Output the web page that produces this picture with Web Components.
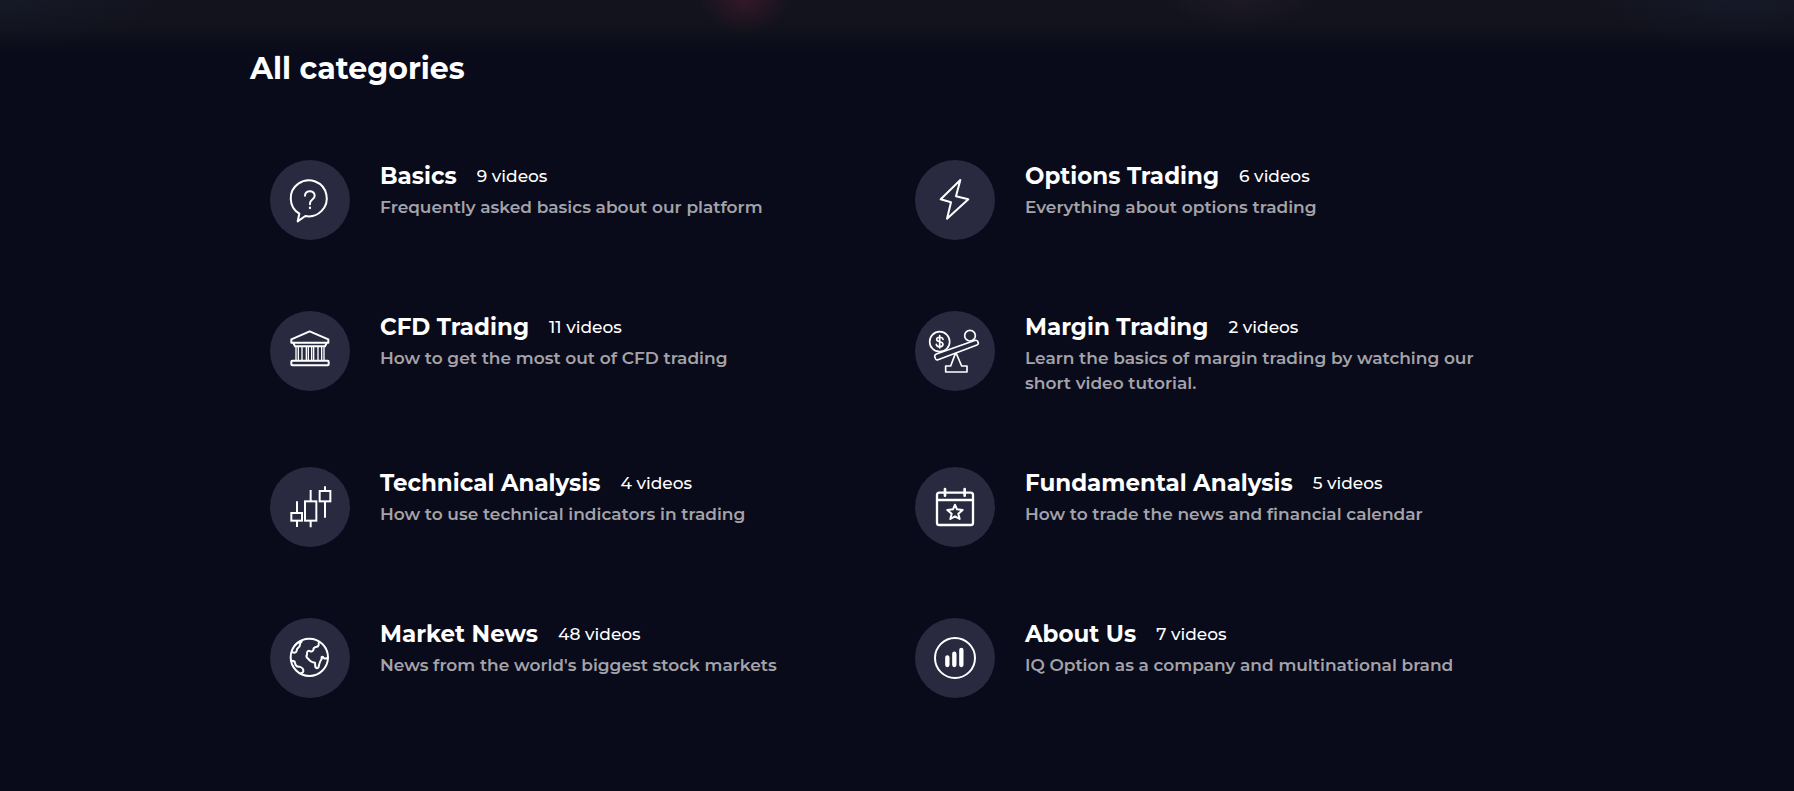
<!DOCTYPE html>
<html lang="en">
<head>
<meta charset="utf-8">
<meta name="viewport" content="width=device-width, initial-scale=1">
<title>All categories</title>
<style>
  html { background: #090a1a; }
  body { margin: 0; color: #fff; font-family: Montserrat, Inter, sans-serif; }
</style>
</head>
<body>
<categories-page>
  <span slot="heading">All categories</span>
  <category-card icon="question" count="9">Basics<span slot="description">Frequently asked basics about our platform</span></category-card>
  <category-card icon="bolt" count="6">Options Trading<span slot="description">Everything about options trading</span></category-card>
  <category-card icon="bank" count="11">CFD Trading<span slot="description">How to get the most out of CFD trading</span></category-card>
  <category-card icon="balance" count="2">Margin Trading<span slot="description">Learn the basics of margin trading by watching our short video tutorial.</span></category-card>
  <category-card icon="candles" count="4">Technical Analysis<span slot="description">How to use technical indicators in trading</span></category-card>
  <category-card icon="calendar" count="5">Fundamental Analysis<span slot="description">How to trade the news and financial calendar</span></category-card>
  <category-card icon="globe" count="48">Market News<span slot="description">News from the world's biggest stock markets</span></category-card>
  <category-card icon="chart" count="7">About Us<span slot="description">IQ Option as a company and multinational brand</span></category-card>
</categories-page>

<script>
const ICONS = {
  question: `<path d="M118 191A54 54 0 1 1 136 198L113 214Z"/><path d="M135 137C135 119 164 119 164 137C164 149 150 148 150 160V163"/><path d="M150 173v1" stroke-width="7"/>`,
  bolt: `<path d="M166 90L107 148L138 157L126 206L190 148L153 139Z"/>`,
  bank: `<path d="M94 125V115L149 91L205 115V125Z"/><path d="M100 126L105 136H195L200 126"/><path d="M108 137V178M115 137V178M126 137V178M139 137V178M145 137V178M155 137V178M161 137V178M174 137V178M185 137V178M192 137V178" stroke-width="4"/><rect x="94" y="179" width="112" height="14" rx="3"/>`,
  balance: `<g stroke-width="5"><circle cx="104" cy="122" r="30"/><circle cx="195" cy="104" r="16"/><path d="M114 115C112 106 94 107 95 116C96 125 114 119 114 130C113 140 95 139 94 130M104 104V141"/><path d="M94 159L211 118Q216 117 218 121L220 127Q220 131 216 132L99 176Q94 178 92 174L89 167Q88 162 94 159Z"/><path d="M151 158L137 195H122V213H186V195H170L154 158"/></g>`,
  candles: `<g stroke-linejoin="miter" stroke-linecap="butt"><path d="M111 133V166M111 192V210M152 99V132M152 192V211M195 88V101M195 134V182"/><rect x="94" y="168" width="32" height="23"/><rect x="135" y="133" width="34" height="58"/><rect x="179" y="102" width="32" height="31"/></g>`,
  calendar: `<g stroke-width="7"><rect x="96" y="107" width="108" height="97" rx="7"/><path d="M97 129H203"/><path d="M120 96V116M179 96V116" stroke-width="8"/></g><path d="M150 143L156 157L173 159L160 170L164 186L150 178L136 186L140 170L127 159L144 157Z"/>`,
  globe: `<circle cx="148" cy="148" r="56"/><path d="M178 102Q175 104 176 111Q175 116 168 117Q160 118 160 126Q157 132 151 130Q147 127 144 129Q139 133 141 140Q137 145 142 150L151 159Q156 163 165 164L166 177Q171 183 175 179L178 168Q180 160 185 153Q183 145 189 147Q191 154 203 150"/><path d="M124 98Q112 103 104 113M121 106Q120 115 114 120Q110 122 110 129Q108 136 97 133M119 105L125 101M94 158Q100 158 104 161Q105 165 107 171Q110 177 118 176Q131 180 130 189Q130 194 123 196"/>`,
  chart: `<circle cx="150" cy="150" r="60"/><g stroke-width="13"><path d="M127 148V171M148 137V171M169 126V171"/></g>`
};

class CategoriesPage extends HTMLElement {
  constructor() {
    super();
    this.attachShadow({ mode: "open" }).innerHTML = `
      <style>
        :host {
          display: block;
          min-height: 100vh;
          box-sizing: border-box;
          padding: 50px 24px 90px;
          background:
            radial-gradient(44px 34px at 745px 0, rgba(84, 28, 52, .5), rgba(70, 26, 46, .3) 50%, transparent),
            radial-gradient(70px 30px at 1240px 0, rgba(54, 40, 54, .25), transparent),
            radial-gradient(140px 50px at 1740px 0, rgba(24, 34, 56, .35), transparent),
            radial-gradient(160px 50px at 0 0, rgba(24, 34, 52, .35), transparent),
            linear-gradient(#14141f, #11121c 28px, #0c0e1a 42px, #090a1a 58px);
        }
        main { max-width: 1294px; margin: 0 auto; }
        h1 { margin: 0 0 72px; font-size: 30px; line-height: 38px; font-weight: 700; }
        .grid {
          display: grid;
          grid-template-columns: repeat(2, minmax(0, 1fr));
          gap: 71px 36px;
          padding: 0 20px;
        }
        @media (max-width: 900px) { .grid { grid-template-columns: minmax(0, 1fr); } }
      </style>
      <main>
        <h1><slot name="heading"></slot></h1>
        <div class="grid"><slot></slot></div>
      </main>`;
  }
}

class CategoryCard extends HTMLElement {
  constructor() {
    super();
    this.attachShadow({ mode: "open" }).innerHTML = `
      <style>
        :host { display: block; }
        a { display: flex; align-items: flex-start; gap: 30px; color: inherit; text-decoration: none; }
        category-icon { flex: none; }
        .text { flex: 1; min-width: 0; }
        .head { display: flex; align-items: center; gap: 20px; margin-bottom: 3px; line-height: 32px; }
        h2 { margin: 0; font-size: 23px; font-weight: 700; }
        .count { font-size: 17px; font-weight: 500; }
        p { margin: 0; font-size: 17px; line-height: 25px; font-weight: 600; color: #a3a3a9; }
      </style>
      <a href="#${this.getAttribute("icon")}">
        <category-icon name="${this.getAttribute("icon")}"></category-icon>
        <div class="text">
          <div class="head"><h2><slot></slot></h2><span class="count">${this.getAttribute("count")} videos</span></div>
          <p><slot name="description"></slot></p>
        </div>
      </a>`;
  }
}

class CategoryIcon extends HTMLElement {
  constructor() {
    super();
    this.attachShadow({ mode: "open" });
  }
  connectedCallback() {
    this.shadowRoot.innerHTML = `
      <style>
        :host { display: block; width: 80px; height: 80px; border-radius: 50%; background: #292a40; }
        svg { display: block; width: 100%; height: 100%; fill: none; stroke: #fff; stroke-width: 6; stroke-linecap: round; stroke-linejoin: round; }
      </style>
      <svg viewBox="30 30 240 240" aria-hidden="true">${ICONS[this.getAttribute("name")]}</svg>`;
  }
}

customElements.define("category-icon", CategoryIcon);
customElements.define("category-card", CategoryCard);
customElements.define("categories-page", CategoriesPage);
</script>
</body>
</html>
